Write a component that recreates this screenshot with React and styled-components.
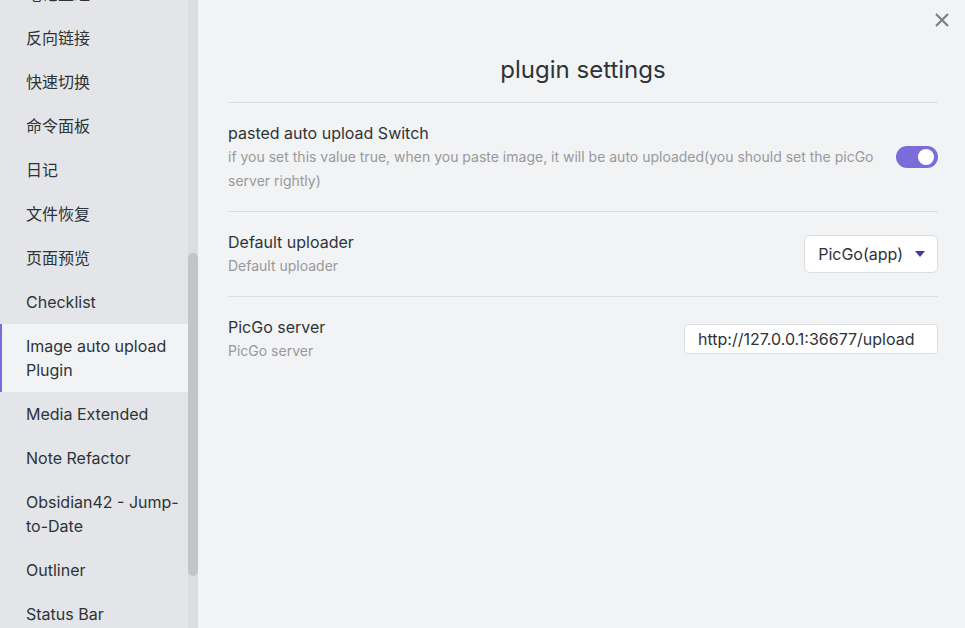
import React from "react";
import styled, { createGlobalStyle } from "styled-components";

const GlobalStyle = createGlobalStyle`
  html, body {
    margin: 0;
    padding: 0;
    height: 100%;
    overflow: hidden;
  }
  body {
    font-family: Inter, "Noto Sans CJK SC", sans-serif;
    color: #2e3338;
    background: #f2f3f5;
  }
`;

const Layout = styled.div`
  display: flex;
  width: 965px;
  height: 628px;
  overflow: hidden;
`;

const Sidebar = styled.div`
  width: 198px;
  flex-shrink: 0;
  display: flex;
  background: #e3e5e8;
`;

const NavList = styled.div`
  flex: 1;
  margin-top: -28px;
`;

const NavItem = styled.div`
  padding: 10px 4px 10px ${(p) => (p.active ? "24px" : "26px")};
  font-size: 16px;
  line-height: 24px;
  color: #2e3338;
  background: ${(p) => (p.active ? "#f2f3f5" : "transparent")};
  border-left: ${(p) => (p.active ? "2px solid #7b6cd9" : "none")};
`;

const ScrollTrack = styled.div`
  width: 10px;
  flex-shrink: 0;
  background: #dcdde1;
  display: flex;
  flex-direction: column;
  padding-top: 253px;
`;

const ScrollThumb = styled.div`
  height: 323px;
  border-radius: 5px;
  background: #c3c4c7;
`;

const Main = styled.div`
  flex: 1;
  position: relative;
  padding: 0 27px 0 30px;
`;

const Close = styled.div`
  position: absolute;
  top: 12px;
  right: 15px;
  width: 16px;
  height: 16px;
  color: #7f7f7f;
`;

const Title = styled.h2`
  margin: 0;
  padding: 55px 0 17px;
  font-size: 24px;
  font-weight: 400;
  line-height: 30px;
  text-align: center;
  color: #2e3338;
  border-bottom: 1px solid #dcdde0;
`;

const Setting = styled.div`
  display: flex;
  align-items: center;
  padding: ${(p) => p.pad || "18px 0"};
  border-bottom: ${(p) => (p.last ? "none" : "1px solid #dcdde0")};
`;

const Info = styled.div`
  flex: 1;
  margin-right: 12px;
`;

const Name = styled.div`
  font-size: 16px;
  line-height: 24px;
  color: #2e3338;
`;

const Desc = styled.div`
  font-size: 14px;
  line-height: 24px;
  color: #999999;
`;

const Toggle = styled.div`
  width: 42px;
  height: 22px;
  border-radius: 11px;
  background: #7b6cd9;
  position: relative;
  flex-shrink: 0;
  &::after {
    content: "";
    position: absolute;
    right: 4px;
    top: 3px;
    width: 16px;
    height: 16px;
    border-radius: 50%;
    background: #fff;
  }
`;

const Dropdown = styled.div`
  display: flex;
  align-items: center;
  gap: 12px;
  height: 38px;
  box-sizing: border-box;
  padding: 0 12px 0 13px;
  border: 1px solid #dcdde0;
  border-radius: 6px;
  background: #fff;
  font-size: 16px;
  color: #2e3338;
`;

const Caret = styled.span`
  width: 0;
  height: 0;
  border-left: 5px solid transparent;
  border-right: 5px solid transparent;
  border-top: 6px solid #483699;
`;

const TextInput = styled.div`
  width: 254px;
  height: 30px;
  box-sizing: border-box;
  padding: 0 13px;
  border: 1px solid #dcdde0;
  border-radius: 4px;
  background: #fff;
  font-size: 16px;
  line-height: 28px;
  color: #2e3338;
  white-space: nowrap;
`;

const navItems = [
  "笔记重组",
  "反向链接",
  "快速切换",
  "命令面板",
  "日记",
  "文件恢复",
  "页面预览",
  "Checklist",
  "Image auto upload Plugin",
  "Media Extended",
  "Note Refactor",
  "Obsidian42 - Jump-to-Date",
  "Outliner",
  "Status Bar",
  "Tag Wrangler",
];

const App = () => {
  return (
    <Layout>
      <GlobalStyle />
      <Sidebar>
        <NavList>
          {navItems.map((item) => (
            <NavItem key={item} active={item === "Image auto upload Plugin"}>
              {item}
            </NavItem>
          ))}
        </NavList>
        <ScrollTrack>
          <ScrollThumb />
        </ScrollTrack>
      </Sidebar>
      <Main>
        <Close>
          <svg width="16" height="16" viewBox="0 0 16 16">
            <path d="M2 2 L14 14 M14 2 L2 14" stroke="currentColor" strokeWidth="2.2" />
          </svg>
        </Close>
        <Title>plugin settings</Title>
        <Setting pad="18px 0 18px">
          <Info>
            <Name>pasted auto upload Switch</Name>
            <Desc>
              if you set this value true, when you paste image, it will be auto
              uploaded(you should set the picGo server rightly)
            </Desc>
          </Info>
          <Toggle />
        </Setting>
        <Setting pad="18px 0 18px">
          <Info>
            <Name>Default uploader</Name>
            <Desc>Default uploader</Desc>
          </Info>
          <Dropdown>
            PicGo(app)
            <Caret />
          </Dropdown>
        </Setting>
        <Setting last pad="18px 0">
          <Info>
            <Name>PicGo server</Name>
            <Desc>PicGo server</Desc>
          </Info>
          <TextInput>http://127.0.0.1:36677/upload</TextInput>
        </Setting>
      </Main>
    </Layout>
  );
};

export default App;
